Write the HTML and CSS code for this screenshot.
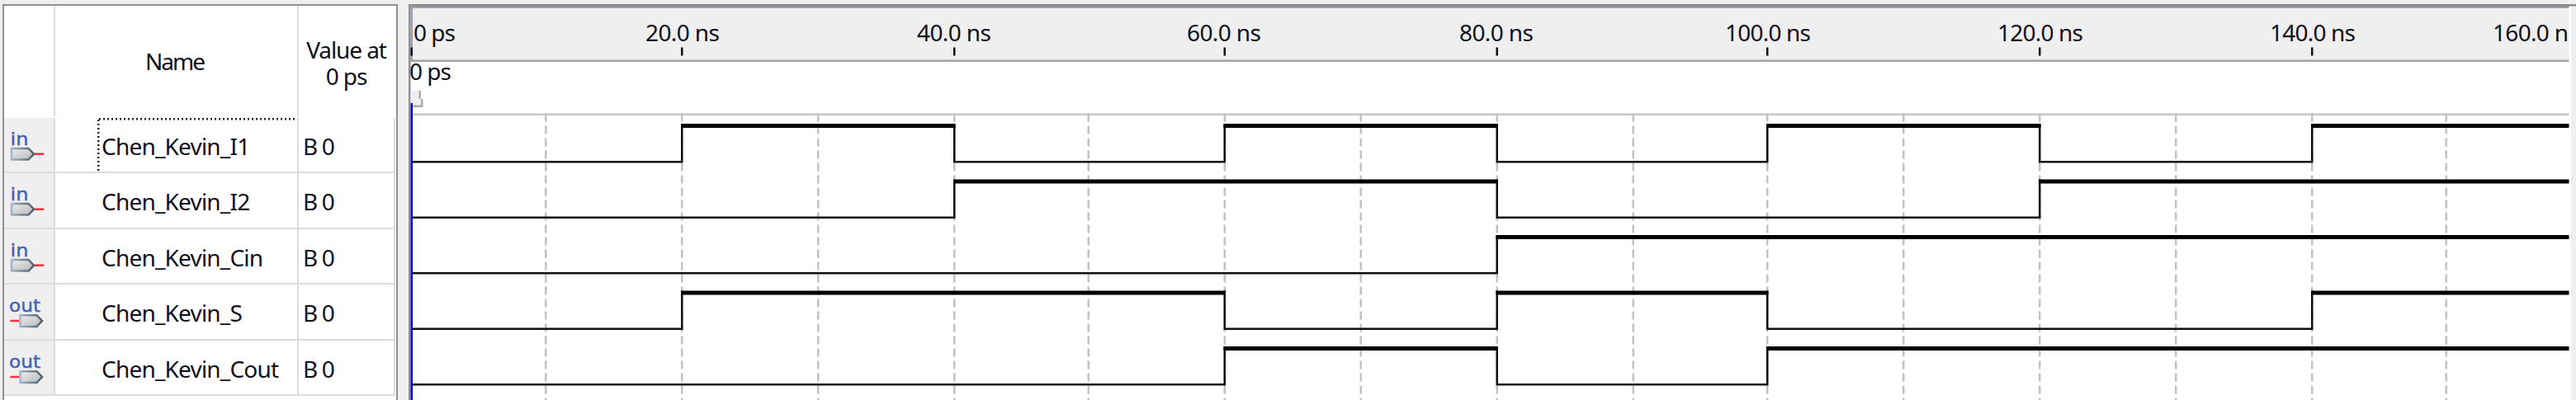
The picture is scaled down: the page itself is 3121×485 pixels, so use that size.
FILE: index.html
```html
<!DOCTYPE html>
<html lang="en">
<head>
<meta charset="utf-8">
<title>Simulation Waveform Editor</title>
<link rel="stylesheet" href="styles.css">
</head>
<body>
<svg width="0" height="0" class="defs">
  <defs>
    <linearGradient id="metal" x1="0" y1="0" x2="1" y2="1">
      <stop offset="0" stop-color="#eeeeec"/><stop offset="1" stop-color="#b4b8ba"/>
    </linearGradient>
    <linearGradient id="edge" x1="0" y1="0" x2="1" y2="0">
      <stop offset="0" stop-color="#a3b5cc"/><stop offset="1" stop-color="#4c5c66"/>
    </linearGradient>
    <symbol id="pin-in" viewBox="0 0 60 65">
      <text class="pin-label" x="7.5" y="32.5" textLength="22" lengthAdjust="spacingAndGlyphs">in</text>
      <path d="M9 37H29.5L36 43.7L29.5 50.5H9Z" fill="url(#metal)" stroke="url(#edge)" stroke-width="2.5"/>
      <path d="M36.5 43.7H48" stroke="#ee3338" stroke-width="2.5"/>
    </symbol>
    <symbol id="pin-out" viewBox="0 0 60 65">
      <text class="pin-label" x="6" y="32.5" textLength="38" lengthAdjust="spacingAndGlyphs">out</text>
      <path d="M19.5 37.2H39.5L46 44L39.5 51H19.5Z" fill="url(#metal)" stroke="url(#edge)" stroke-width="2.5"/>
      <path d="M7.5 44H18" stroke="#ee3338" stroke-width="2.5"/>
    </symbol>
  </defs>
</svg>
<main class="editor">
  <section class="signals">
    <div class="row head">
      <div class="cell pin"></div>
      <div class="cell name">Name</div>
      <div class="cell value"><span>Value at</span><span class="time">0 ps</span></div>
    </div>
    <div class="row selected">
      <div class="cell pin"><svg class="icon"><use href="#pin-in"/></svg></div>
      <div class="cell name"><span class="label">Chen_Kevin_I1</span></div>
      <div class="cell value">B 0</div>
    </div>
    <div class="row">
      <div class="cell pin"><svg class="icon"><use href="#pin-in"/></svg></div>
      <div class="cell name"><span class="label">Chen_Kevin_I2</span></div>
      <div class="cell value">B 0</div>
    </div>
    <div class="row">
      <div class="cell pin"><svg class="icon"><use href="#pin-in"/></svg></div>
      <div class="cell name"><span class="label">Chen_Kevin_Cin</span></div>
      <div class="cell value">B 0</div>
    </div>
    <div class="row">
      <div class="cell pin"><svg class="icon"><use href="#pin-out"/></svg></div>
      <div class="cell name"><span class="label">Chen_Kevin_S</span></div>
      <div class="cell value">B 0</div>
    </div>
    <div class="row">
      <div class="cell pin"><svg class="icon"><use href="#pin-out"/></svg></div>
      <div class="cell name"><span class="label">Chen_Kevin_Cout</span></div>
      <div class="cell value">B 0</div>
    </div>
  </section>
  <section class="waves">
    <svg class="chart" viewBox="495 5 2626 480" width="2626" height="480">
      <rect x="495" y="5" width="2620" height="480" fill="#fff"/>
      <rect x="495" y="5" width="2617.5" height="69" fill="#efefef"/>
      <rect x="3115" y="5" width="6" height="480" fill="#efefef"/>
      <rect x="495" y="5" width="2617.5" height="5" fill="#9ba0a4"/>
      <rect x="495" y="5" width="2626" height="2.5" fill="#858b90"/>
      <rect x="495" y="5" width="2.5" height="480" fill="#8b9196"/>
      <rect x="497.5" y="7.5" width="2.5" height="66" fill="#9ba0a4"/>
      <rect x="497.5" y="72.5" width="2615" height="2.5" fill="#a5a5a5"/>
      <rect x="500" y="137.5" width="2612.5" height="2.5" fill="#c6c6c6"/>

      <path class="tick" d="M498.75 57.5v10M826.25 57.5v10M1156.25 57.5v10M1483.75 57.5v10M1813.75 57.5v10M2141.25 57.5v10M2471.25 57.5v10M2801.25 57.5v10"/>
      <g class="ruler">
        <text x="501" y="50" textLength="51">0 ps</text>
        <text x="782" y="50" textLength="90">20.0 ns</text>
        <text x="1111" y="50" textLength="90">40.0 ns</text>
        <text x="1438" y="50" textLength="90">60.0 ns</text>
        <text x="1768" y="50" textLength="90">80.0 ns</text>
        <text x="2090" y="50" textLength="104">100.0 ns</text>
        <text x="2420" y="50" textLength="104">120.0 ns</text>
        <text x="2750" y="50" textLength="104">140.0 ns</text>
        <text x="3020" y="50" textLength="92">160.0 n</text>
        <text x="496" y="97" textLength="51">0 ps</text>
      </g>

      <path class="grid" d="M661.25 137.5V485M826.25 137.5V485M991.25 137.5V485M1156.25 137.5V485M1318.75 137.5V485M1483.75 137.5V485M1648.75 137.5V485M1813.75 137.5V485M1978.75 137.5V485M2141.25 137.5V485M2306.25 137.5V485M2471.25 137.5V485M2636.25 137.5V485M2801.25 137.5V485M2963.75 137.5V485"/>

      <!-- logic-low levels and transitions -->
      <path class="low" d="M500 196.25H826.25V150M1156.25 150V196.25H1483.75V150M1813.75 150V196.25H2141.25V150M2471.25 150V196.25H2801.25V150"/>
      <path class="low" d="M500 263.75H1156.25V217.5M1813.75 217.5V263.75H2471.25V217.5"/>
      <path class="low" d="M500 331.25H1813.75V285"/>
      <path class="low" d="M500 398.75H826.25V352.5M1483.75 352.5V398.75H1813.75V352.5M2141.25 352.5V398.75H2801.25V352.5"/>
      <path class="low" d="M500 466.25H1483.75V420M1813.75 420V466.25H2141.25V420"/>
      <!-- logic-high levels -->
      <path class="high" d="M825 152.5H1157.5M1482.5 152.5H1815M2140 152.5H2472.5M2800 152.5H3112.5"/>
      <path class="high" d="M1155 220H1815M2470 220H3112.5"/>
      <path class="high" d="M1812.5 287.5H3112.5"/>
      <path class="high" d="M825 355H1485M1812.5 355H2142.5M2800 355H3112.5"/>
      <path class="high" d="M1482.5 422.5H1815M2140 422.5H3112.5"/>

      <!-- time bar handle -->
      <path d="M497.5 110H510V120H512.5V130H497.5Z" fill="#efefef"/>
      <path d="M508.75 110V120M511.25 120V128.75H500" fill="none" stroke="#a8a8a8" stroke-width="2.3"/>
      <rect x="497.5" y="125" width="2.5" height="360" fill="#0000f0"/>
    </svg>
  </section>
</main>
</body>
</html>
```
FILE: styles.css
```css
body {
  margin: 0;
  background: #efefef;
  color: #10101c;
  font: 28px/32px "Noto Sans", sans-serif;
  overflow: hidden;
}
.defs { position: absolute; }
.editor {
  display: flex;
  gap: 13px;
  box-sizing: border-box;
  height: 485px;
  padding: 5px 0 0 3px;
}
.signals {
  box-sizing: border-box;
  width: 479px;
  flex: none;
  background: #fff;
  border: solid #8b9196;
  border-width: 2px 2px 0;
}
.row {
  display: grid;
  grid-template-columns: 62px 295px 1fr;
  box-sizing: border-box;
  width: 474px;
  height: 67.5px;
  border-bottom: 2px solid #dcdcdc;
  border-right: 2px solid #dcdcdc;
}
.cell {
  box-sizing: border-box;
  display: flex;
  align-items: center;
  border-right: 2px solid #dcdcdc;
  white-space: pre;
}
.cell.value { border-right: 0; padding: 3px 0 0 5px; letter-spacing: -1.4px; }
.row .pin { background: #efefef; }
.row .name { padding: 3px 0 0 56px; letter-spacing: -.8px; }
.row.head {
  height: 135.5px;
  border-color: transparent;
}
.row.head .pin { background: #fff; }
.row.head .name { justify-content: center; padding: 0 4px 0 0; letter-spacing: -2px; }
.row.head .value {
  flex-direction: column;
  justify-content: center;
  padding: 5px 0 0;
  letter-spacing: -1.1px;
}
.selected .name {
  background:
    repeating-linear-gradient(90deg, #222 0 2.5px, transparent 2.5px 5px) 53px 0 / 240px 2.5px no-repeat,
    repeating-linear-gradient(180deg, #222 0 2.5px, transparent 2.5px 5px) 51px 2px / 2.5px 63px no-repeat;
}
.icon { width: 60px; height: 65px; display: block; }
.pin-label { font: 22px "DejaVu Sans", sans-serif; fill: #4560b8; stroke: #4560b8; stroke-width: .4px; }
.waves { flex: none; width: 2626px; }
.chart { display: block; }
.ruler text { font: 28px "Noto Sans", sans-serif; fill: #10101c; }
.tick { stroke: #111; stroke-width: 2.5; }
.grid { stroke: #c2c2c2; stroke-width: 2.5; stroke-dasharray: 10 5; fill: none; }
.low { stroke: #111; stroke-width: 2.5; fill: none; }
.high { stroke: #000; stroke-width: 5; fill: none; }
```
